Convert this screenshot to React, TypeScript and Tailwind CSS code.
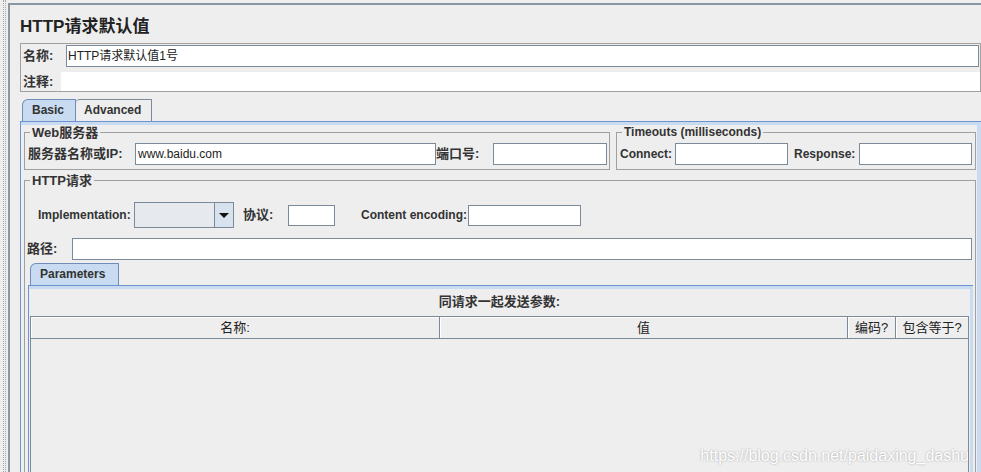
import React from "react";

function Input({ w, h = "h-[22px]", value }: { w: string; h?: string; value?: string }) {
  return (
    <div className={`${w} ${h} shrink-0 bg-white border border-[#7a8a99] flex items-center px-[2px] text-[12px] leading-[14px] text-[#222] whitespace-nowrap overflow-hidden`}>
      {value}
    </div>
  );
}

function Label({ w, children, en }: { w: string; children: React.ReactNode; en?: boolean }) {
  return (
    <span className={`${w} shrink-0 font-bold whitespace-nowrap ${en ? "text-[12px]" : "text-[13px]"}`}>
      {children}
    </span>
  );
}

export default function App() {
  return (
    <div className="relative w-[981px] h-[472px] overflow-hidden bg-[#eeeeee] flex text-[#333] font-['Liberation_Sans','Noto_Sans_CJK_SC',sans-serif]">
      {/* dotted splitter */}
      <div className="w-[8px] shrink-0 pl-[3px]">
        <div className="w-[3px] h-full border-x border-dotted border-[#a8a8a8]" />
      </div>

      <div className="flex-1 min-w-0 mt-[3px] border-l-2 border-t-2 border-[#8a97a3] pl-[10px] flex flex-col">
        <h1 className="mt-[12px] h-[20px] text-[17px] leading-[20px] font-bold text-[#222]">HTTP请求默认值</h1>

        {/* name / comment */}
        <div className="mt-[6px] border border-[#a0a0a0] flex flex-col">
          <div className="flex items-center h-[24px] pl-[2px] pr-[1px]">
            <Label w="w-[43px]">名称:</Label>
            <div className="flex-1 h-[22px] bg-white border border-[#7a8a99] flex items-center px-[1px] text-[12px] text-[#222]">
              HTTP请求默认值1号
            </div>
          </div>
          <div className="flex items-end h-[23px] pl-[2px]">
            <span className="w-[38px] h-[19px] leading-[19px] text-[13px] font-bold">注释:</span>
            <div className="flex-1 h-[19px] bg-white" />
          </div>
        </div>

        {/* tabs */}
        <div className="mt-[7px] flex items-end h-[22px] pl-[2px]">
          <div className="w-[54px] h-[22px] bg-[#c8dbf0] border border-b-0 border-[#6f8db8] rounded-tl-[6px] text-[12px] font-bold leading-[20px] pl-[9px]">
            Basic
          </div>
          <div className="w-[76px] h-[22px] border border-b-0 border-l-0 border-[#7a8a99] rounded-tl-[4px] text-[12px] font-bold leading-[20px] pl-[8px]">
            Advanced
          </div>
        </div>

        <div className="flex-1 flex flex-col border-t border-l border-[#6f93cf]">
          <div className="h-[3px] bg-[#c8dbf0]" />
          <div className="flex-1 flex flex-col pl-[3px] pr-[1px] border-r-4 border-r-[#c8dbf0]">
            <div className="flex gap-[6px]">
              <fieldset className="w-[586px] border border-[#a0a0a0] pl-[3px] pr-[1px] pb-[4px]">
                <legend className="ml-[2px] px-[2px] text-[13px] leading-[15px] font-bold">Web服务器</legend>
                <div className="mt-[3px] flex items-center h-[22px]">
                  <Label w="w-[107px]">服务器名称或IP:</Label>
                  <Input w="w-[301px]" value="www.baidu.com" />
                  <Label w="w-[57px]">端口号:</Label>
                  <Input w="w-[114px]" />
                </div>
              </fieldset>
              <fieldset className="w-[360px] border border-[#a0a0a0] pl-[3px] pr-[3px] pb-[4px]">
                <legend className="ml-[2px] px-[2px] text-[12px] leading-[15px] font-bold">Timeouts (milliseconds)</legend>
                <div className="mt-[3px] flex items-center h-[22px]">
                  <Label w="w-[55px]" en>Connect:</Label>
                  <Input w="w-[113px]" />
                  <span className="w-[6px]" />
                  <Label w="w-[65px]" en>Response:</Label>
                  <Input w="w-[113px]" />
                </div>
              </fieldset>
            </div>

            <fieldset className="mt-[3px] flex-1 min-h-0 flex flex-col border border-b-0 border-[#a0a0a0] pl-[3px] pr-[2px]">
              <legend className="ml-[2px] px-[2px] text-[13px] leading-[15px] font-bold">HTTP请求</legend>
              <div className="mt-[14px] flex items-center h-[26px]">
                <span className="w-[10px]" />
                <Label w="w-[96px]" en>Implementation:</Label>
                <div className="w-[100px] h-[26px] flex border border-[#7a8a99] bg-[#e6eaef]">
                  <div className="flex-1" />
                  <div className="w-[19px] border-l border-[#7a8a99] bg-[#d8e2ee] flex items-center justify-center">
                    <svg width="10" height="5" viewBox="0 0 10 5">
                      <path d="M0 0h10L5 5z" fill="#111" />
                    </svg>
                  </div>
                </div>
                <span className="w-[9px]" />
                <Label w="w-[45px]">协议:</Label>
                <Input w="w-[47px]" h="h-[21px]" />
                <span className="w-[26px]" />
                <Label w="w-[107px]" en>Content encoding:</Label>
                <Input w="w-[113px]" h="h-[21px]" />
              </div>

              <div className="mt-[10px] flex items-center h-[22px] -ml-[1px]">
                <Label w="w-[45px]">路径:</Label>
                <div className="flex-1 h-[22px] bg-white border border-[#7a8a99] mr-[1px]" />
              </div>

              {/* parameters tab */}
              <div className="mt-[3px] flex items-end h-[22px] pl-[2px]">
                <div className="w-[89px] h-[22px] bg-[#c8dbf0] border border-b-0 border-[#6f8db8] rounded-tl-[6px] text-[12px] font-bold leading-[20px] pl-[9px]">
                  Parameters
                </div>
              </div>
              <div className="flex-1 flex flex-col border-t border-l border-[#6f93cf]">
                <div className="h-[3px] bg-[#c8dbf0]" />
                <div className="flex-1 flex flex-col px-[1px] border-r-[3px] border-r-[#c8dbf0]">
                  <div className="mt-[5px] h-[16px] leading-[16px] text-center text-[13px] font-bold">
                    同请求一起发送参数:
                  </div>
                  <div className="mt-[6px] flex-1 flex flex-col border-x border-[#7a8a99]">
                    <div className="flex h-[23px] border-y border-[#7a8a99] text-[13px] leading-[21px] text-center text-[#222]">
                      <div className="w-[409px] border-r border-[#7a8a99] shadow-[inset_1px_1px_0_#fff]">名称:</div>
                      <div className="w-[408px] border-r border-[#7a8a99] shadow-[inset_1px_1px_0_#fff]">值</div>
                      <div className="w-[48px] border-r border-[#7a8a99] shadow-[inset_1px_1px_0_#fff]">编码?</div>
                      <div className="flex-1 shadow-[inset_1px_1px_0_#fff]">包含等于?</div>
                    </div>
                    <div className="flex-1" />
                  </div>
                </div>
              </div>
            </fieldset>
          </div>
        </div>
      </div>

      {/* watermark */}
      <div className="absolute right-[12px] bottom-[7px] text-[16px] leading-[18px] text-white [text-shadow:0_0_2px_rgba(0,0,0,0.35)] font-['Liberation_Sans',sans-serif]">
        https://blog.csdn.net/paidaxing_dashu
      </div>
    </div>
  );
}
